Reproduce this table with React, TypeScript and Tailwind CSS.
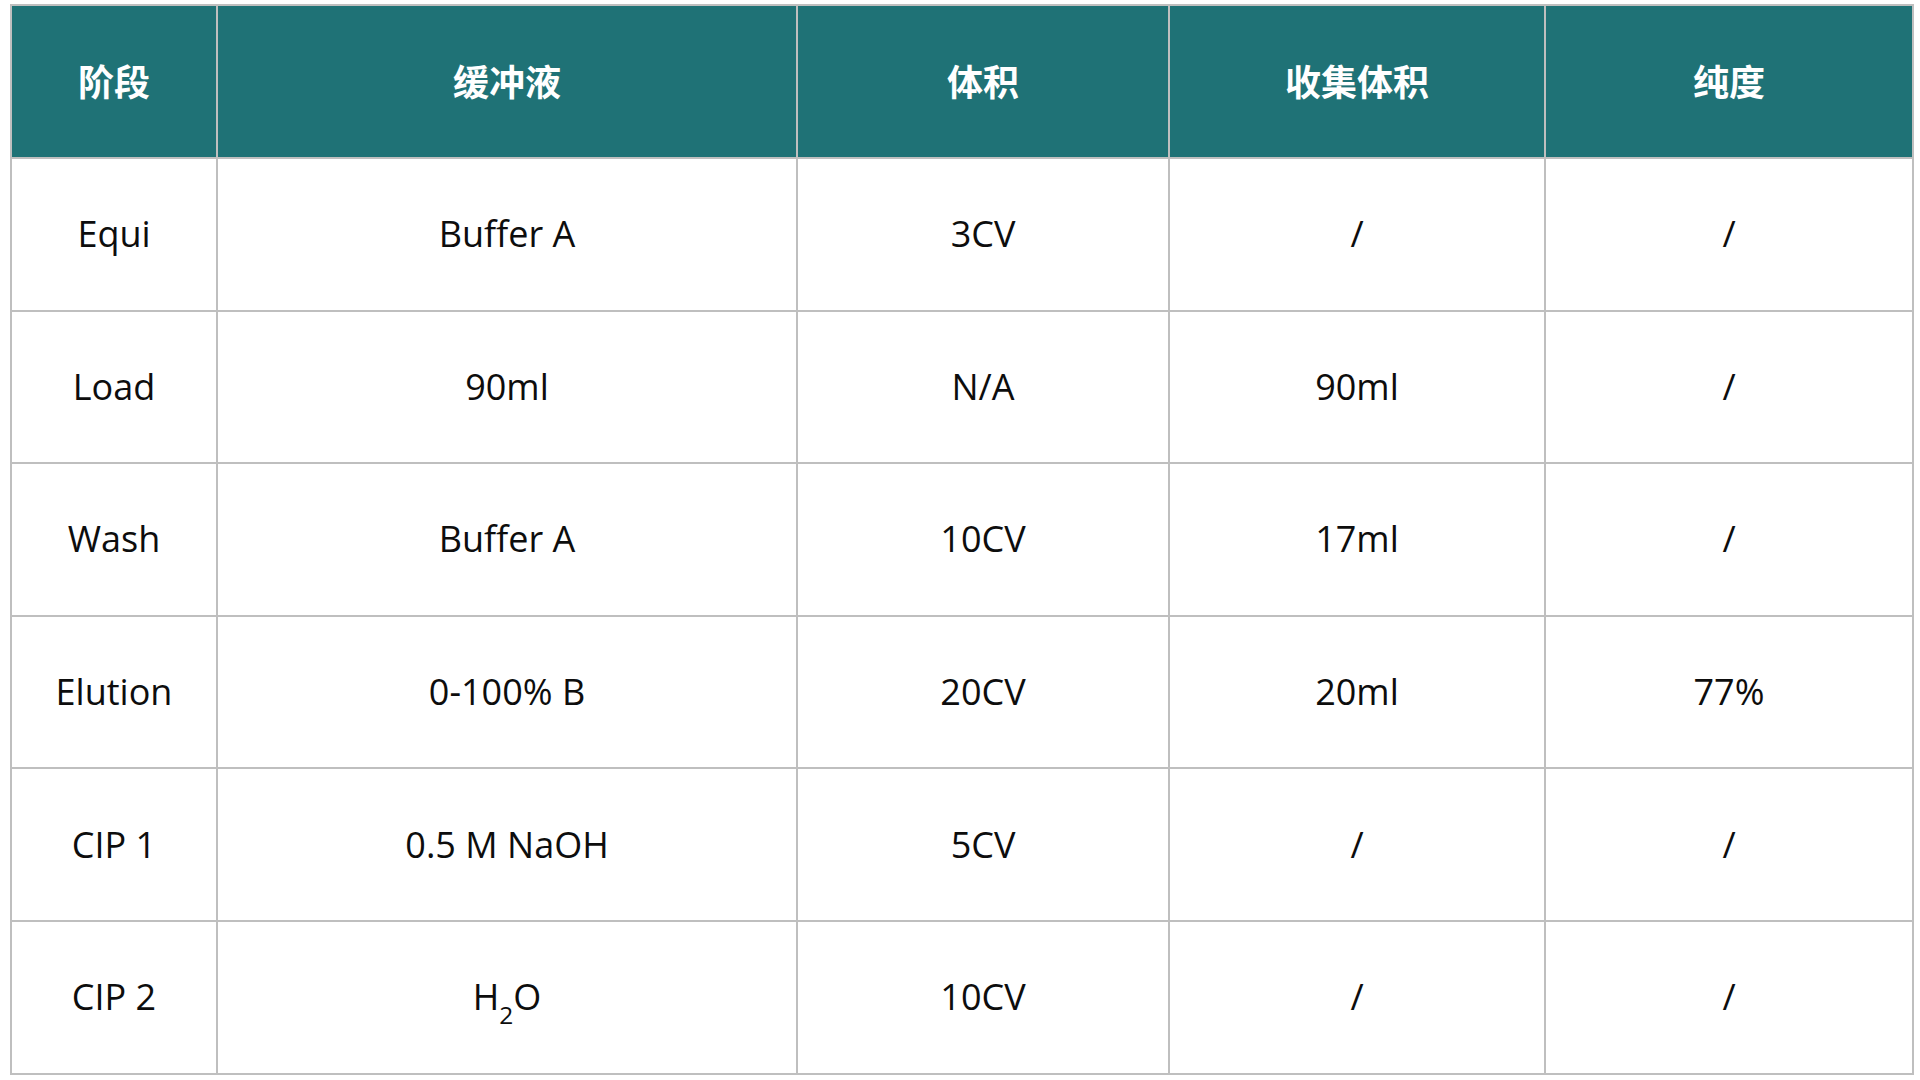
const headers = ["阶段", "缓冲液", "体积", "收集体积", "纯度"];

type Row = [string, React.ReactNode, string, string, string];

const rows: Row[] = [
    ["Equi", "Buffer A", "3CV", "/", "/"],
    ["Load", "90ml", "N/A", "90ml", "/"],
    ["Wash", "Buffer A", "10CV", "17ml", "/"],
    ["Elution", "0-100% B", "20CV", "20ml", "77%"],
    ["CIP 1", "0.5 M NaOH", "5CV", "/", "/"],
    [
        "CIP 2",
        <>
            H<sub className="text-[0.68em] align-[-0.3em]">2</sub>O
        </>,
        "10CV",
        "/",
        "/",
    ],
];

const colWidths = ["w-[206px]", "w-[580px]", "w-[372px]", "w-[376px]", "w-[368px]"];

export default function App() {
    return (
        <div
            className="h-[1080px] w-[1920px] bg-white pl-[10px] pt-[4px]"
            style={{ fontFamily: '"Open Sans", "Noto Sans CJK SC", sans-serif' }}
        >
            <table className="w-[1902px] table-fixed border-collapse">
                <colgroup>
                    {colWidths.map((w, i) => (
                        <col key={i} className={w} />
                    ))}
                </colgroup>
                <thead>
                    <tr className="h-[153px]">
                        {headers.map((h) => (
                            <th
                                key={h}
                                className="border-2 border-[#bfbfbf] bg-[#1f7276] pb-1 text-center font-['Noto_Sans_CJK_SC',sans-serif] text-[36px] font-bold text-white"
                            >
                                {h}
                            </th>
                        ))}
                    </tr>
                </thead>
                <tbody>
                    {rows.map((row, r) => (
                        <tr key={r} className="h-[152.6px]">
                            {row.map((cell, c) => (
                                <td
                                    key={c}
                                    className="border-2 border-[#bfbfbf] text-center text-[36px] text-[#0d0d0d]"
                                >
                                    {cell}
                                </td>
                            ))}
                        </tr>
                    ))}
                </tbody>
            </table>
        </div>
    );
}
